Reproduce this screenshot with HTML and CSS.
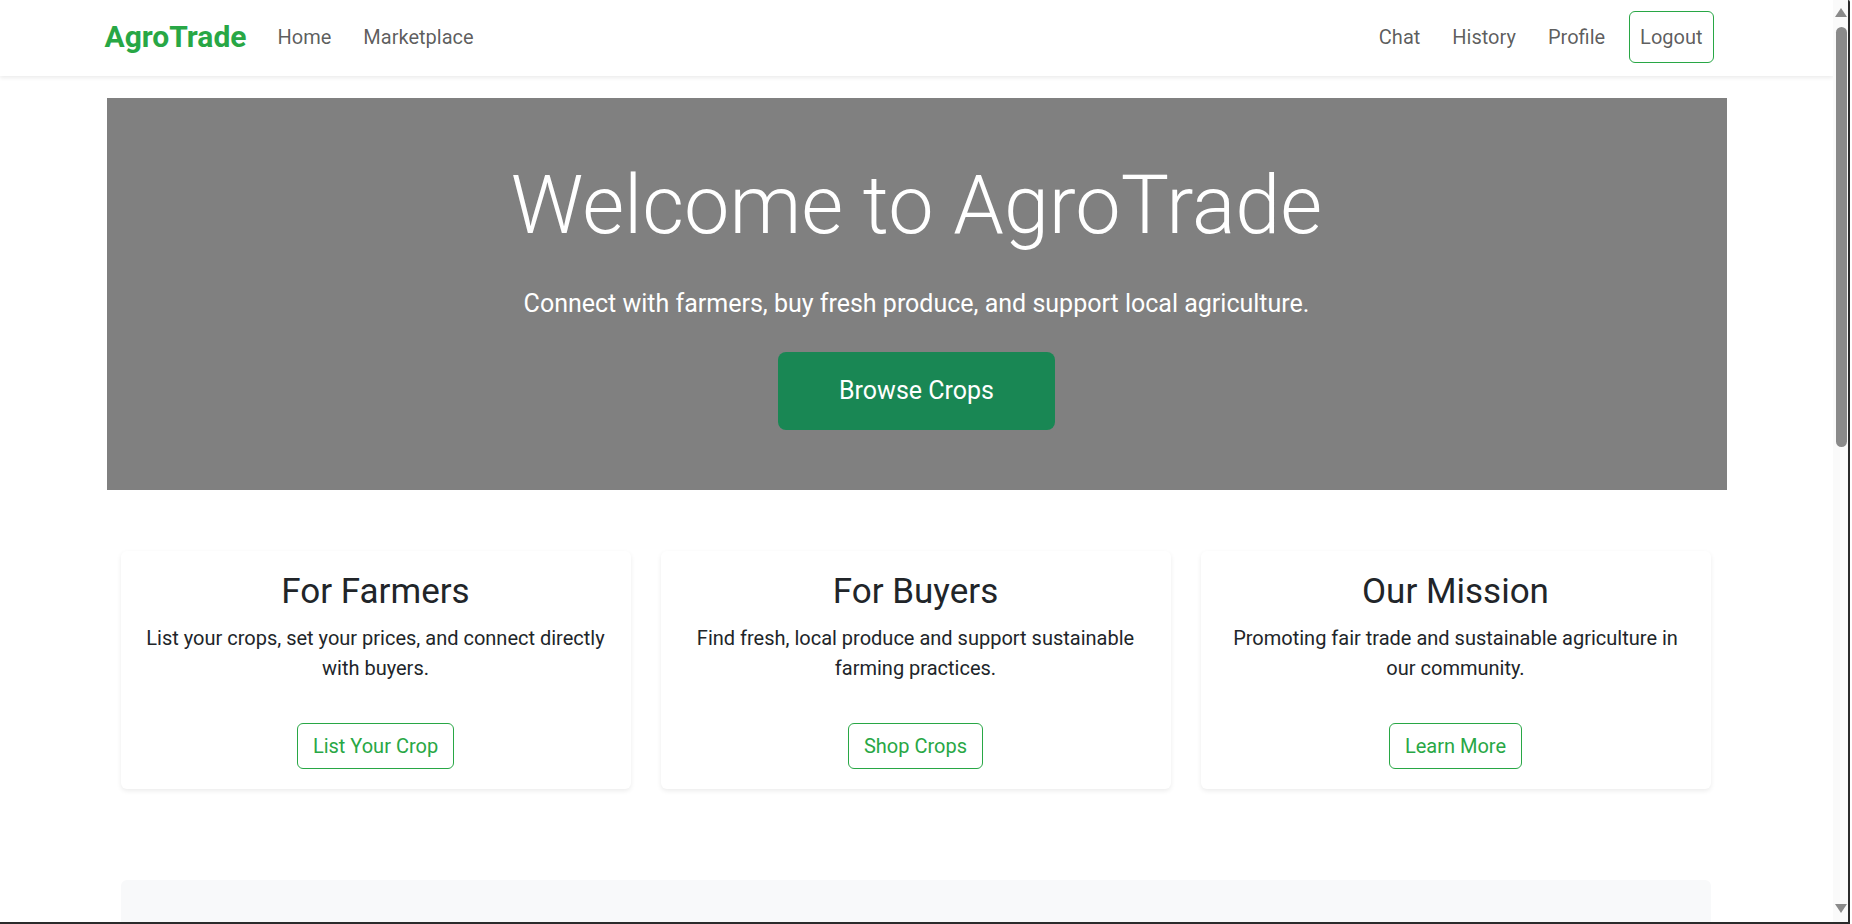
FILE: index.html
```html
<!DOCTYPE html>
<html lang="en">
<head>
<meta charset="utf-8">
<title>AgroTrade</title>
<link rel="stylesheet" href="styles.css">
</head>
<body>
<nav class="navbar">
  <div class="nav-inner">
    <a class="brand" href="#">AgroTrade</a>
    <ul class="nav-left">
      <li><a class="nav-link" href="#">Home</a></li>
      <li><a class="nav-link" href="#">Marketplace</a></li>
    </ul>
    <ul class="nav-right">
      <li><a class="nav-link" href="#">Chat</a></li>
      <li><a class="nav-link" href="#">History</a></li>
      <li><a class="nav-link" href="#">Profile</a></li>
      <li><a class="nav-link logout" href="#">Logout</a></li>
    </ul>
  </div>
</nav>

<main class="container">
  <section class="hero">
    <h1 class="hero-title">Welcome to AgroTrade</h1>
    <p class="hero-lead">Connect with farmers, buy fresh produce, and support local agriculture.</p>
    <a class="btn-browse" href="#">Browse Crops</a>
  </section>

  <section class="features">
    <div class="card">
      <h2 class="card-title">For Farmers</h2>
      <p class="card-text">List your crops, set your prices, and connect directly with buyers.</p>
      <a class="btn-outline" href="#">List Your Crop</a>
    </div>
    <div class="card">
      <h2 class="card-title">For Buyers</h2>
      <p class="card-text">Find fresh, local produce and support sustainable farming practices.</p>
      <a class="btn-outline" href="#">Shop Crops</a>
    </div>
    <div class="card">
      <h2 class="card-title">Our Mission</h2>
      <p class="card-text">Promoting fair trade and sustainable agriculture in our community.</p>
      <a class="btn-outline" href="#">Learn More</a>
    </div>
  </section>

  <section class="panel"></section>
</main>

<div class="win-scrollbar" aria-hidden="true">
  <span class="sb-arrow sb-up"></span>
  <span class="sb-thumb"></span>
  <span class="sb-arrow sb-down"></span>
</div>
<div class="win-frame-right" aria-hidden="true"></div>
<div class="win-frame-bottom" aria-hidden="true"></div>
</body>
</html>
```

FILE: styles.css
```css
* { box-sizing: border-box; }

html, body {
  margin: 0;
  padding: 0;
}

body {
  font-family: Roboto, "Liberation Sans", sans-serif;
  color: #212529;
  background: #ffffff;
  font-size: 16px;
  line-height: 1.5;
  padding-right: 19px;
}

a { text-decoration: none; }

.navbar {
  background: #ffffff;
  box-shadow: 0 2px 4px rgba(0, 0, 0, 0.08);
  padding: 11px 0 13px;
  position: relative;
  z-index: 2;
}

.nav-inner {
  max-width: 1620px;
  margin: 0 auto;
  display: flex;
  align-items: center;
  padding: 0 13px 0 0;
}

.brand {
  color: #28a745;
  font-weight: 700;
  font-size: 30px;
  line-height: 1.2;
  margin-left: -2px;
  margin-right: 23px;
}

.nav-left, .nav-right {
  list-style: none;
  margin: 0;
  padding: 0;
  display: flex;
  align-items: center;
  gap: 16px;
}

.nav-right { margin-left: auto; }

.nav-link {
  display: block;
  color: rgba(0, 0, 0, 0.65);
  font-size: 20px;
  line-height: 30px;
  padding: 10px 8px;
}

.logout {
  border: 1px solid #28a745;
  border-radius: 6px;
  padding: 10px 10px;
}

.container {
  max-width: 1620px;
  margin: 22px auto 0;
}

.hero {
  background: #808080;
  color: #ffffff;
  text-align: center;
  padding: 60px 16px 60px;
}

.hero-title {
  margin: 0 0 32px;
  font-size: 81px;
  font-weight: 300;
  line-height: 96px;
}

.hero-lead {
  margin: 0 0 30px;
  font-size: 25px;
  line-height: 36px;
  font-weight: 400;
}

.btn-browse {
  display: inline-block;
  background: #198754;
  color: #ffffff;
  font-size: 25px;
  line-height: 36px;
  padding: 21px 61px;
  border-radius: 8px;
}

.features {
  display: grid;
  grid-template-columns: repeat(3, 1fr);
  gap: 30px;
  padding: 0 16px 0 14px;
  margin-top: 61px;
}

.card {
  background: #ffffff;
  border-radius: 6px;
  box-shadow: 0 2px 5px rgba(0, 0, 0, 0.08);
  padding: 20px 20px 20px;
  text-align: center;
}

.card-title {
  margin: 0 0 10px;
  font-size: 35px;
  font-weight: 400;
  line-height: 42px;
}

.card-text {
  margin: 0 0 40px;
  font-size: 20px;
  line-height: 30px;
}

.btn-outline {
  display: inline-block;
  color: #28a745;
  border: 1px solid #28a745;
  border-radius: 6px;
  font-size: 20px;
  line-height: 28px;
  padding: 8px 15px;
}

.panel {
  margin: 91px 16px 40px 14px;
  height: 300px;
  background: #f8f9fa;
  border-radius: 6px;
}

/* window chrome visible in the capture: scrollbar + frame */
.win-scrollbar {
  position: fixed;
  top: 0;
  right: 4px;
  width: 15px;
  height: 922px;
  background: #fafafa;
  z-index: 10;
}

.sb-thumb {
  position: absolute;
  left: 3px;
  top: 27px;
  width: 11px;
  height: 420px;
  background: #8a8a8a;
  border-radius: 6px;
}

.sb-arrow {
  position: absolute;
  left: 2px;
  width: 0;
  height: 0;
  border-left: 6px solid transparent;
  border-right: 6px solid transparent;
}

.sb-up {
  top: 8px;
  border-bottom: 9px solid #8a8a8a;
}

.sb-down {
  top: 904px;
  border-top: 9px solid #8a8a8a;
}

.win-frame-right {
  position: fixed;
  top: 0;
  right: 2px;
  width: 2px;
  height: 924px;
  background: #2b2b2b;
  border-radius: 0 8px 0 0;
  z-index: 11;
}

.win-frame-bottom {
  position: fixed;
  left: 0;
  bottom: 0;
  width: 1850px;
  height: 2px;
  background: #2b2b2b;
  z-index: 11;
}
```
